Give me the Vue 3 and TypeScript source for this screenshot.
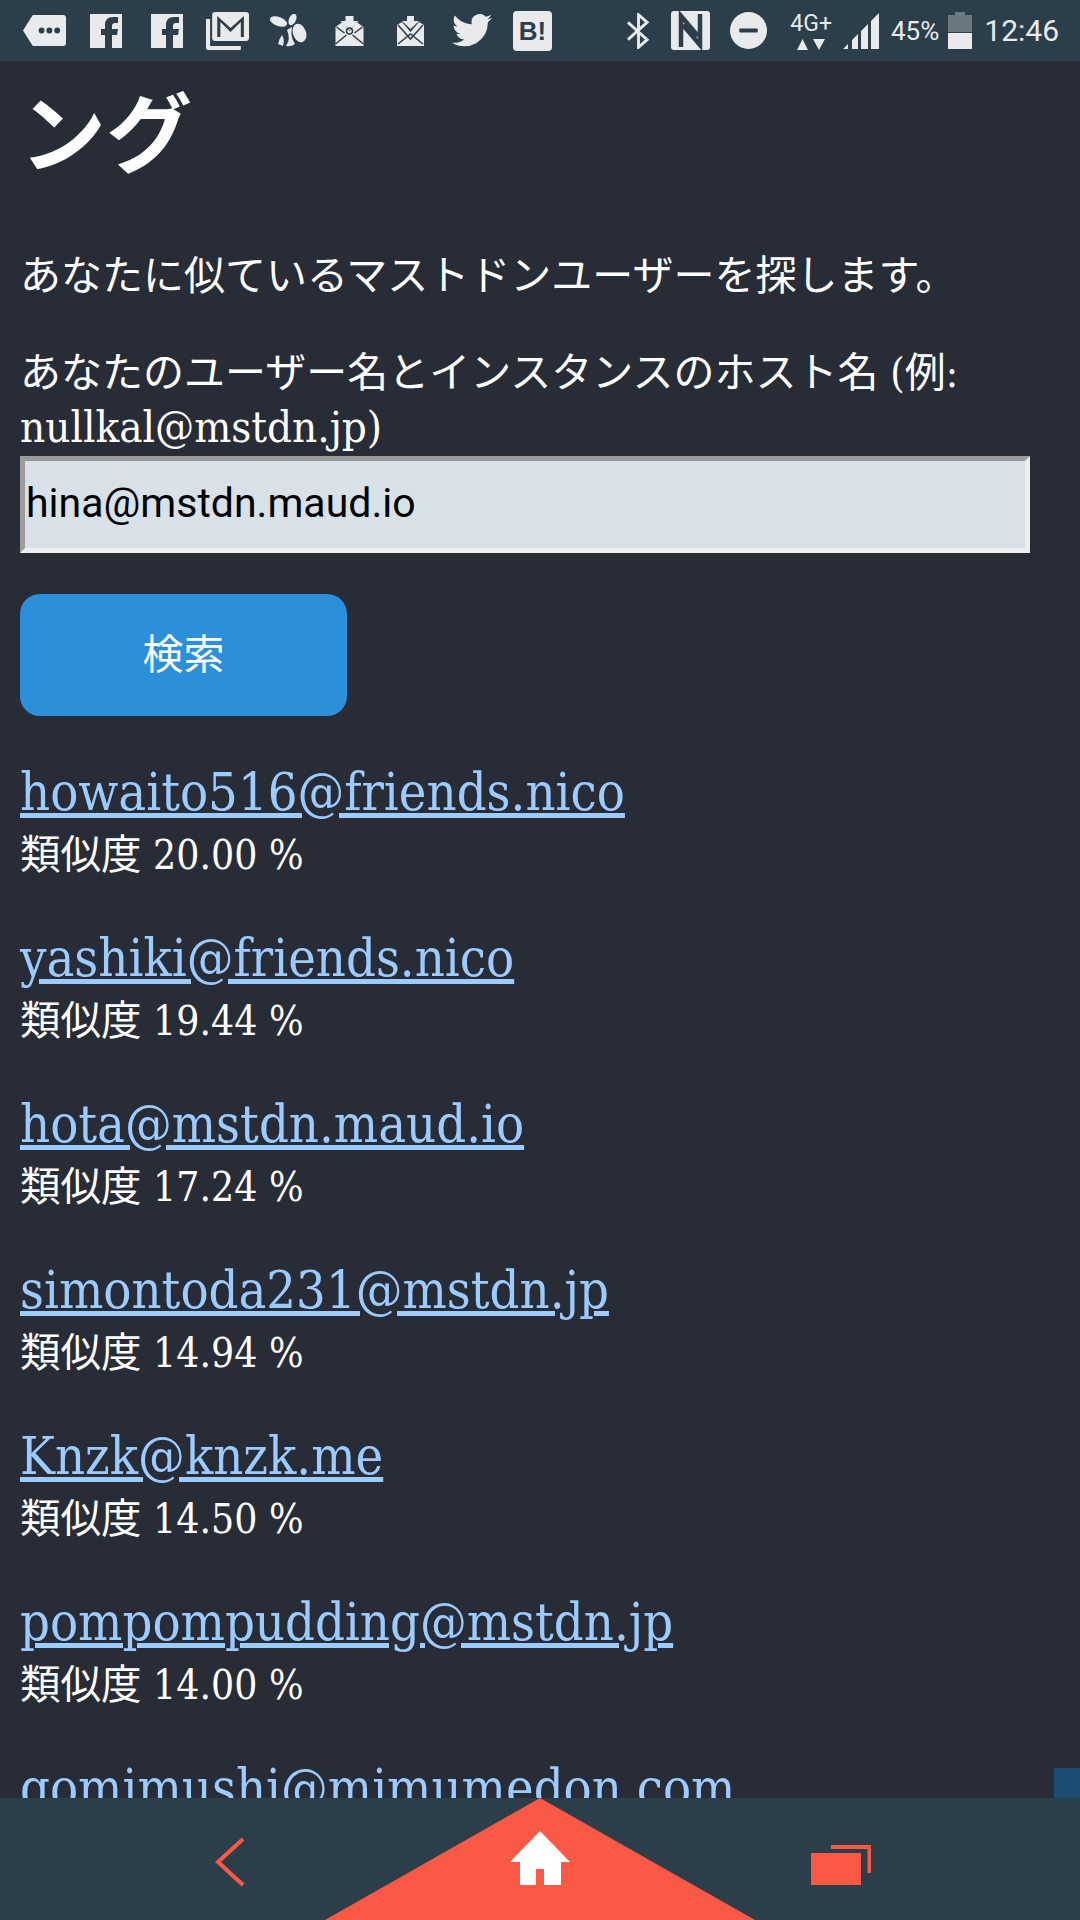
<script setup lang="ts">
const results = [
  { name: 'howaito516@friends.nico', score: '20.00' },
  { name: 'yashiki@friends.nico', score: '19.44' },
  { name: 'hota@mstdn.maud.io', score: '17.24' },
  { name: 'simontoda231@mstdn.jp', score: '14.94' },
  { name: 'Knzk@knzk.me', score: '14.50' },
  { name: 'pompompudding@mstdn.jp', score: '14.00' },
  { name: 'gomimushi@mimumedon.com', score: '13.00' },
]
</script>

<template>
  <div class="screen">
    <header class="status">
      <div class="notif">
        <span class="slot"><svg width="43" height="33" viewBox="0 0 44 34" preserveAspectRatio="none"><path d="M0 17 10 1h31q3 0 3 3v26q0 3-3 3H10z" fill="#e8eaec"/><circle cx="19" cy="17" r="3" fill="#2c3e4a"/><circle cx="27" cy="17" r="3" fill="#2c3e4a"/><circle cx="35" cy="17" r="3" fill="#2c3e4a"/></svg></span>
        <span class="slot"><svg width="32" height="34" viewBox="0 0 32 34"><path fill-rule="evenodd" d="M0 0h32v34H0zM22 34V21h5l1-6h-6v-3q0-3 3-3h3V3h-5q-8 0-8 8v4h-4v6h4v13z" fill="#e8eaec"/></svg></span>
        <span class="slot"><svg width="32" height="34" viewBox="0 0 32 34"><path fill-rule="evenodd" d="M0 0h32v34H0zM22 34V21h5l1-6h-6v-3q0-3 3-3h3V3h-5q-8 0-8 8v4h-4v6h4v13z" fill="#e8eaec"/></svg></span>
        <span class="slot"><svg width="43" height="38" viewBox="0 0 42 38" preserveAspectRatio="none"><path d="M0 7h4v27h30v4H2q-2 0-2-2z" fill="#e8eaec"/><path fill-rule="evenodd" d="M9 0h30q3 0 3 3v23q0 3-3 3H9q-3 0-3-3V3q0-3 3-3zm2 4 13 12L37 4v21h-3V10L24 20 14 10v15h-3z" fill="#e8eaec"/></svg></span>
        <span class="slot"><svg width="37" height="33" viewBox="0 0 37 33"><ellipse cx="8.500" cy="7.500" rx="9" ry="4.500" transform="rotate(20 8.500 7.500)" fill="#e8eaec"/><ellipse cx="22.500" cy="5.500" rx="3.500" ry="6" transform="rotate(25 22.500 5.500)" fill="#e8eaec"/><ellipse cx="29.500" cy="19" rx="6.500" ry="9.500" transform="rotate(-20 29.500 19)" fill="#e8eaec"/><path d="M17 16l5-3q-2 10 3 17-4 3-9 2 5-7 1-16zM12 21q3 5 1 11l-5-2q1-5 4-9z" fill="#e8eaec"/></svg></span>
        <span class="slot"><svg width="29" height="30" viewBox="0 0 28 30"><path d="M10 0h8v5h5L14 14 5 5h5z" fill="#e8eaec"/><path d="M0 11 7 6l7 9 7-9 7 5v19H0z" fill="#e8eaec"/><path d="M0 28 11 19M28 28 17 19M1 11l8 6M27 11l-8 6" stroke="#2c3e4a" stroke-width="1.500" fill="none"/><circle cx="14" cy="15" r="3" fill="none" stroke="#2c3e4a" stroke-width="1.500"/></svg></span>
        <span class="slot"><svg width="29" height="30" viewBox="0 0 27 30"><path d="M10 0h7v5h5L13.500 13 5 5h5z" fill="#e8eaec"/><path d="M0 9l5-3 8.500 10L22 6l5 3v21H0z" fill="#e8eaec"/><path d="M1 28 13.500 18 26 28M1 9l12.500 14L26 9" stroke="#2c3e4a" stroke-width="1.500" fill="none"/></svg></span>
        <span class="slot"><svg width="40" height="33" viewBox="0 0 24 20" preserveAspectRatio="none"><path d="M24 2.400c-.9.400-1.800.7-2.800.8 1-.6 1.800-1.600 2.200-2.700-1 .6-2 1-3.100 1.200A4.900 4.900 0 0 0 11.900 6.200C7.800 6 4.200 4 1.700.9.400 3.200 1 6 3.200 7.500c-.8 0-1.600-.2-2.200-.6 0 2.400 1.700 4.500 3.900 5-.7.2-1.500.2-2.200.1.600 2 2.400 3.400 4.600 3.400A9.900 9.900 0 0 1 0 17.400 14 14 0 0 0 21.500 5c1-.7 1.800-1.600 2.500-2.600z" fill="#e8eaec"/></svg></span>
        <span class="slot"><span class="hatena">B!</span></span>
      </div>
      <div class="sys">
        <svg class="bt" width="23" height="36" viewBox="0 0 24 36"><path d="M1 9l20 18-9 8V1l9 8L1 27" fill="none" stroke="#e8eaec" stroke-width="3"/></svg>
        <svg class="nfc" width="39" height="39" viewBox="0 0 39 39"><rect width="39" height="39" rx="3" fill="#e8eaec"/><path d="M10 36V5L27 25M29 3V34L12 14" fill="none" stroke="#2c3e4a" stroke-width="4.500"/></svg>
        <svg class="dnd" width="37" height="37" viewBox="0 0 36 36"><circle cx="18" cy="18" r="18" fill="#e8eaec"/><rect x="9" y="16" width="18" height="4" rx="1" fill="#2c3e4a"/></svg>
        <div class="net"><span>4G+</span><svg width="28" height="11" viewBox="0 0 28 11"><path d="M0 11 5.500 0 11 11zM16 0h12l-6 11z" fill="#e8eaec"/></svg></div>
        <svg class="sig" width="36" height="36" viewBox="0 0 36 36"><path d="M0 36l5-5v5zM9 36v-9l6-6v15zM18 36V18l7-7v25zM28 36V8l8-8v36z" fill="#e8eaec"/></svg>
        <span class="pct">45%</span>
        <svg class="bat" width="24" height="37" viewBox="0 0 24 37"><path d="M7 0h10v3h7v17H0V3h7z" fill="#6a787f"/><path d="M0 21h24v16H0z" fill="#e8eaec"/></svg>
        <span class="time">12:46</span>
      </div>
    </header>

    <main class="page">
      <h1>ング</h1>
      <p class="lead">あなたに似ているマストドンユーザーを探します。</p>
      <form class="form" @submit.prevent>
        <label class="label" for="q">あなたのユーザー名とインスタンスのホスト名 (例: <span class="handle">nullkal@mstdn.jp)</span></label>
        <input id="q" class="input" type="text" value="hina@mstdn.maud.io" />
        <button class="btn" type="submit">検索</button>
      </form>
      <section class="results">
        <div v-for="r in results" :key="r.name" class="result">
          <a class="link" href="#">{{ r.name }}</a>
          <div class="score">類似度 {{ r.score }} %</div>
        </div>
      </section>
    </main>

    <div class="thumb"></div>

    <nav class="nav">
      <svg class="tri" width="430" height="122" viewBox="0 0 430 122"><path d="M215 0 430 122H0z" fill="#fa5a45"/></svg>
      <svg class="back" width="30" height="50" viewBox="0 0 30 50"><path d="M28 2 3 25l25 23" fill="none" stroke="#fa5a45" stroke-width="4"/></svg>
      <svg class="home" width="60" height="54" viewBox="0 0 60 54"><path d="M30 0 60 31h-9v23H34V38h-8v16H10V31H0z" fill="#fff"/></svg>
      <svg class="tabs" width="60" height="40" viewBox="0 0 60 40"><path d="M20 0h40v28h-3.500V4H20z" fill="#fa5a45"/><rect x="0" y="8" width="50" height="32" fill="#fa5a45"/></svg>
    </nav>
  </div>
</template>

<style>
html, body { margin: 0; background: #282c37; }
</style>

<style scoped>
.screen {
  position: relative;
  width: 1080px;
  height: 1920px;
  display: flex;
  flex-direction: column;
  overflow: hidden;
  background: #282c37;
  color: #fff;
  font-family: "DejaVu Serif", "Noto Sans CJK JP", serif;
  font-stretch: condensed;
}
.status {
  height: 61px;
  flex: none;
  background: #2c3e4a;
  display: flex;
  align-items: center;
  justify-content: space-between;
  padding: 0 21px 0 14px;
  box-sizing: border-box;
}
.notif, .sys { display: flex; align-items: center; }
.slot { width: 61px; display: flex; justify-content: center; align-items: center; }
.hatena {
  width: 39px; height: 40px; border-radius: 4px; background: #e8eaec; color: #2c3e4a;
  font: 700 26px/40px "Liberation Sans", sans-serif; text-align: center;
}
.nfc { margin-left: 21px; }
.dnd { margin-left: 20px; }
.net { margin-left: 23px; display: flex; flex-direction: column; align-items: center; font: 23px/24px Roboto, sans-serif; color: #e8eaec; gap: 3px; }
.sig { margin-left: 11px; }
.pct { margin-left: 12px; font: 26px Roboto, sans-serif; color: #e8eaec; }
.bat { margin-left: 9px; }
.time { margin-left: 12px; font: 30px Roboto, sans-serif; color: #e8eaec; }
.page {
  flex: 1;
  min-height: 0;
  overflow: hidden;
  padding: 0 20px;
}
h1 {
  margin: 25px 0 0;
  font: 700 86px/85px "Noto Sans CJK JP", sans-serif;
}
.lead { margin: 74px 0 0; font: 41px/54px "Noto Sans CJK JP", serif; }
.label { display: block; margin-top: 47px; font-size: 41px; line-height: 55px; }
.handle { font-size: 43.500px; line-height: 1; }
.form { display: flex; flex-direction: column; align-items: flex-start; }
.input {
  box-sizing: border-box;
  width: 1010px;
  height: 97px;
  padding: 0 0 4px 1px;
  background: #d9e1e8;
  border: 5px solid;
  border-color: #9b9b9b #eee #eee #9b9b9b;
  color: #000;
  font: 41px Roboto, sans-serif;
  outline: none;
}
.btn {
  width: 327px;
  height: 122px;
  margin-top: 41px;
  padding: 0 0 8px;
  border: 0;
  border-radius: 20px;
  background: #2b90d9;
  color: #fff;
  font: 41px/1 "Noto Sans CJK JP", sans-serif;
}
.results { margin-top: 46px; display: flex; flex-direction: column; gap: 40px; }
.result { display: flex; flex-direction: column; }
.link { color: #9bcbff; font-size: 52px; line-height: 60px; text-decoration: underline; }
.score { font-size: 40.500px; line-height: 66px; }
.thumb { position: absolute; right: 0; top: 1768px; width: 26px; height: 30px; background: #1c4c74; }
.nav {
  position: relative;
  height: 122px;
  flex: none;
  background: #2c3e4a;
}
.tri { position: absolute; left: 325px; top: 0; }
.back { position: absolute; left: 214px; top: 39px; width: 32px; height: 50px; }
.home { position: absolute; left: 510px; top: 33px; }
.tabs { position: absolute; left: 811px; top: 47px; }
</style>
